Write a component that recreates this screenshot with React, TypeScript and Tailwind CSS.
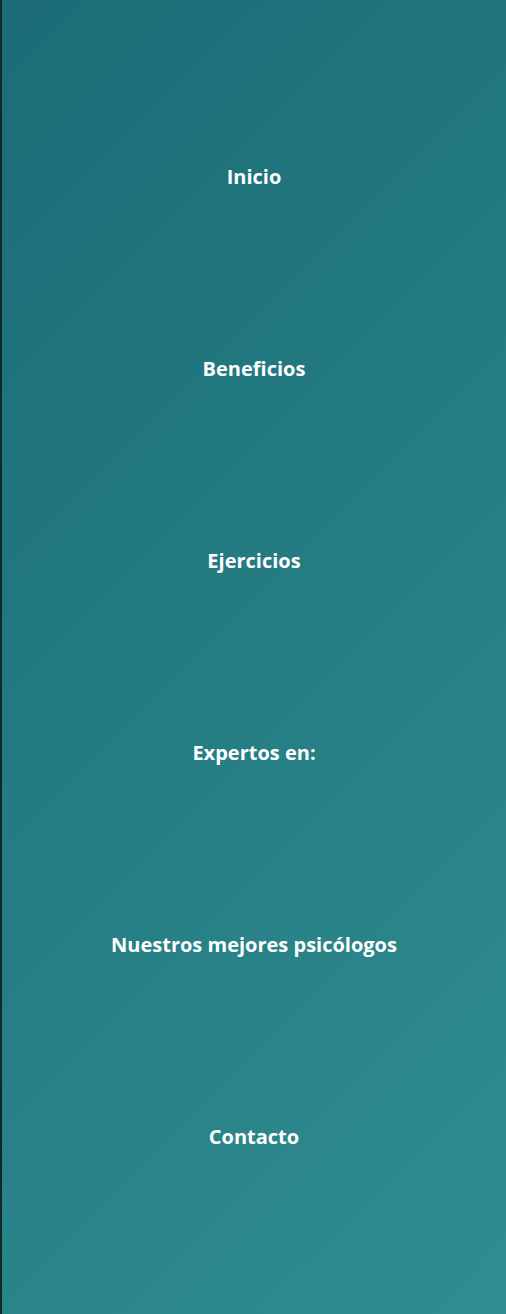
const links = ['Inicio', 'Beneficios', 'Ejercicios', 'Expertos en:', 'Nuestros mejores psicólogos', 'Contacto']

function App() {
  return (
    <nav className="flex flex-col justify-evenly h-screen min-h-[1314px] border-l-2 border-[#10292d] bg-[linear-gradient(135deg,#1b6c76,#2f8e90)] font-['Open_Sans',sans-serif]">
      {links.map((link) => (
        <a
          key={link}
          href="#"
          className="block text-center text-[20px] leading-[30px] font-bold text-white"
        >
          {link}
        </a>
      ))}
    </nav>
  )
}

export default App
